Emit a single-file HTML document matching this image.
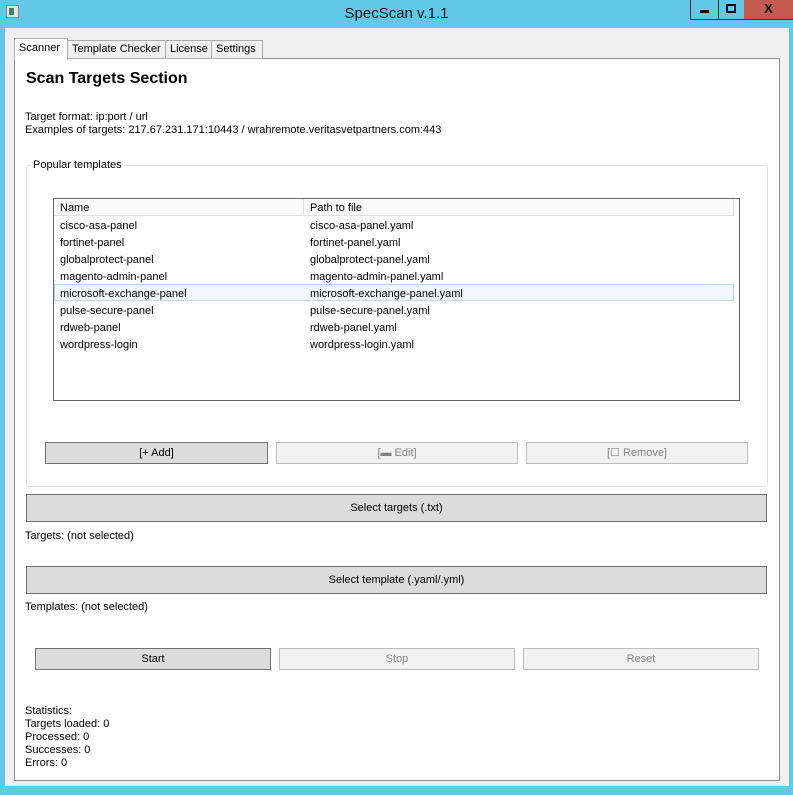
<!DOCTYPE html>
<html><head><meta charset="utf-8"><style>
*{margin:0;padding:0;box-sizing:border-box}
body{width:793px;height:795px;background:#63c8e8;font-family:"Liberation Sans",sans-serif;font-size:11px;color:#000;position:relative;overflow:hidden}
.a{position:absolute}
.t{position:absolute;white-space:nowrap;line-height:13px}
.btn{position:absolute;border:1px solid #adadad;background:#e1e1e1;text-align:center;font-size:11px}
.btn.en{border-color:#707070;background:#dcdcdc}
.btn.dis{background:#f2f2f2;border-color:#bcbcbc;color:#838383}
</style></head><body>
<div class="a" style="left:6px;top:5px;width:13px;height:13px;border:1px solid #888;background:#dfe7e2"></div>
<div class="a" style="left:9px;top:8px;width:5px;height:7px;background:#4a7a70"></div>
<div class="t" style="left:0;width:793px;top:5px;text-align:center;font-size:15px;line-height:18px;color:#111">SpecScan v.1.1</div>
<div class="a" style="left:690px;top:0;width:29px;height:20px;border:1px solid #333;border-top:none"><div class="a" style="left:9px;top:10px;width:9px;height:3px;background:#000"></div></div>
<div class="a" style="left:718px;top:0;width:27px;height:20px;border:1px solid #333;border-top:none;border-left:none"><div class="a" style="left:8px;top:4px;width:10px;height:9px;border:2px solid #000"></div></div>
<div class="a" style="left:744px;top:0;width:49px;height:20px;background:#c45a50;border-bottom:1px solid #333"><div class="t" style="left:0;width:49px;text-align:center;top:2px;font-weight:bold;font-size:13px">X</div></div>

<div class="a" style="left:5px;top:28px;width:784px;height:758px;background:#f0f0f0"></div>
<!-- tabs -->
<div class="a" style="left:14px;top:58px;width:766px;height:723px;background:#fff;border:1px solid #898c95"></div>
<div class="a" style="left:67px;top:40px;width:99px;height:19px;border:1px solid #acacac;background:#f0f0f0"></div>
<div class="t" style="left:72px;top:43px">Template Checker</div>
<div class="a" style="left:165px;top:40px;width:47px;height:19px;border:1px solid #acacac;background:#f0f0f0"></div>
<div class="t" style="left:170px;top:43px">License</div>
<div class="a" style="left:211px;top:40px;width:52px;height:19px;border:1px solid #acacac;background:#f0f0f0"></div>
<div class="t" style="left:216px;top:43px">Settings</div>
<div class="a" style="left:14px;top:38px;width:54px;height:22px;border:1px solid #acacac;border-bottom:none;background:#fff"></div>
<div class="t" style="left:19px;top:42px">Scanner</div>

<div class="t" style="left:26px;top:70px;font-size:16px;line-height:18px;font-weight:bold">Scan Targets Section</div>
<div class="t" style="left:25px;top:111px">Target format: ip:port / url</div>
<div class="t" style="left:25px;top:124px">Examples of targets: 217.67.231.171:10443 / wrahremote.veritasvetpartners.com:443</div>

<div class="a" style="left:26px;top:165px;width:742px;height:322px;border:1px solid #dcdfe3;border-radius:3px"></div>
<div class="t" style="left:31px;top:159px;background:#fff;padding:0 2px">Popular templates</div>

<div class="a" style="left:53px;top:198px;width:687px;height:203px;border:1px solid #646464;background:#fff"></div>
<div class="a" style="left:54px;top:199px;width:680px;height:17px;background:#fafafa;border-bottom:1px solid #e0e0e0"></div>
<div class="a" style="left:303px;top:199px;width:1px;height:17px;background:#e0e0e0"></div>
<div class="a" style="left:733px;top:199px;width:1px;height:17px;background:#e0e0e0"></div>
<div class="t" style="left:60px;top:202px">Name</div>
<div class="t" style="left:310px;top:202px">Path to file</div>
<div class="a" style="left:54px;top:284px;width:680px;height:17px;background:#f1f7fe;border:1px solid #b9d8f6"></div>
<div class="t" style="left:60px;top:218px;line-height:17px">cisco-asa-panel<br>fortinet-panel<br>globalprotect-panel<br>magento-admin-panel<br>microsoft-exchange-panel<br>pulse-secure-panel<br>rdweb-panel<br>wordpress-login</div>
<div class="t" style="left:310px;top:218px;line-height:17px">cisco-asa-panel.yaml<br>fortinet-panel.yaml<br>globalprotect-panel.yaml<br>magento-admin-panel.yaml<br>microsoft-exchange-panel.yaml<br>pulse-secure-panel.yaml<br>rdweb-panel.yaml<br>wordpress-login.yaml</div>

<div class="btn en" style="left:45px;top:442px;width:223px;height:22px;line-height:20px">[+ Add]</div>
<div class="btn dis" style="left:276px;top:442px;width:242px;height:22px;line-height:20px">[▬ Edit]</div>
<div class="btn dis" style="left:526px;top:442px;width:222px;height:22px;line-height:20px">[☐ Remove]</div>

<div class="btn en" style="left:26px;top:494px;width:741px;height:28px;line-height:26px">Select targets (.txt)</div>
<div class="t" style="left:25px;top:530px">Targets: (not selected)</div>
<div class="btn en" style="left:26px;top:566px;width:741px;height:28px;line-height:26px">Select template (.yaml/.yml)</div>
<div class="t" style="left:25px;top:601px">Templates: (not selected)</div>

<div class="btn en" style="left:35px;top:648px;width:236px;height:22px;line-height:20px">Start</div>
<div class="btn dis" style="left:279px;top:648px;width:236px;height:22px;line-height:20px">Stop</div>
<div class="btn dis" style="left:523px;top:648px;width:236px;height:22px;line-height:20px">Reset</div>

<div class="t" style="left:25px;top:705px">Statistics:<br>Targets loaded: 0<br>Processed: 0<br>Successes: 0<br>Errors: 0</div>
</body></html>
